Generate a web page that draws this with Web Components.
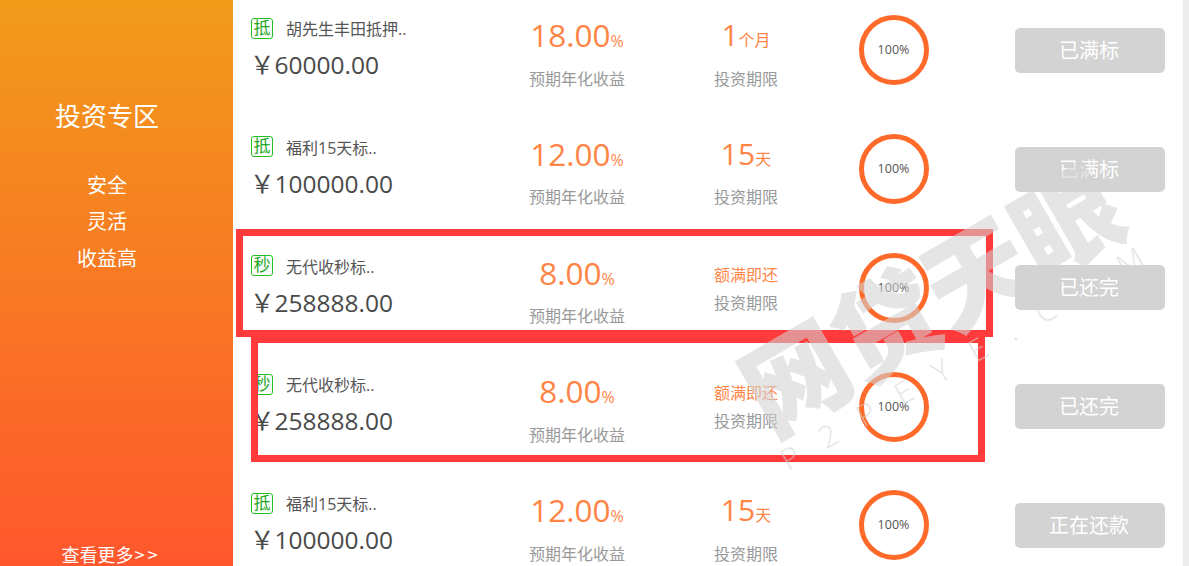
<!DOCTYPE html>
<html lang="zh">
<head>
<meta charset="utf-8">
<title>投资专区</title>
<style>
  html,body{margin:0;height:100%;overflow:hidden;background:#fff}
  body{font-family:"Open Sans","Noto Sans CJK SC",sans-serif}
</style>
</head>
<body>
<invest-page>
  <invest-side slot="side" heading="投资专区" more="查看更多" arrows=">>">
    <span>安全</span><span>灵活</span><span>收益高</span>
  </invest-side>
  <invest-row type="抵" name="胡先生丰田抵押.." amount="60000.00" rate="18.00" term="1" unit="个月" action="已满标"></invest-row>
  <invest-row type="抵" name="福利15天标.." amount="100000.00" rate="12.00" term="15" unit="天" action="已满标"></invest-row>
  <invest-row type="秒" name="无代收秒标.." amount="258888.00" rate="8.00" note="额满即还" action="已还完"></invest-row>
  <invest-row type="秒" name="无代收秒标.." amount="258888.00" rate="8.00" note="额满即还" action="已还完"></invest-row>
  <invest-row type="抵" name="福利15天标.." amount="100000.00" rate="12.00" term="15" unit="天" action="正在还款"></invest-row>
  <mark-box slot="over" style="left:236px;top:229px;width:743px;height:94px"></mark-box>
  <mark-box slot="over" style="left:251px;top:336px;width:720px;height:112px"></mark-box>
  <water-stamp slot="over"></water-stamp>
</invest-page>

<script>
// page shell: sidebar, list of rows, scrollbar strip, overlays on top
class InvestPage extends HTMLElement{
  constructor(){ super(); this.attachShadow({mode:'open'}); }
  connectedCallback(){
    this.shadowRoot.innerHTML = `
      <style>
        :host{display:flex;position:relative;width:1189px;height:566px;overflow:hidden}
        .list{width:950px;margin-top:-9px;flex:none}
        .bar{width:6px;flex:none;background:#ececec}
      </style>
      <slot name="side"></slot>
      <div class="list"><slot></slot></div>
      <div class="bar"></div>
      <slot name="over"></slot>
    `;
  }
}
customElements.define('invest-page', InvestPage);

class InvestSide extends HTMLElement{
  constructor(){ super(); this.attachShadow({mode:'open'}); }
  connectedCallback(){
    this.shadowRoot.innerHTML = `
      <style>
        :host{display:flex;flex:none;flex-direction:column;align-items:center;box-sizing:border-box;width:233px;height:566px;padding:96px 19px 0 0;color:#fff;background:linear-gradient(#f19b1a,#ff572d);font-family:"Noto Sans CJK SC",sans-serif}
        h2{margin:0;font-size:26px;font-weight:400;line-height:38px}
        .tags{display:grid;justify-items:center;grid-auto-rows:36.25px;margin-top:33px;font-size:20px;line-height:36px}
        ::slotted(span){display:block}
        .more{margin-top:auto;font-size:18px;line-height:24px;height:24px;margin-left:8px;white-space:nowrap}
        .more span{margin-left:1px;letter-spacing:3px}
      </style>
      <h2>${this.getAttribute('heading')}</h2>
      <div class="tags"><slot></slot></div>
      <div class="more">${this.getAttribute('more')}<span>&gt;&gt;</span></div>
    `;
  }
}
customElements.define('invest-side', InvestSide);

class InvestRow extends HTMLElement{
  constructor(){ super(); this.attachShadow({mode:'open'}); }
  connectedCallback(){
    const a = n=>this.getAttribute(n)||'';
    const period = a('note')
      ? `<div class="note">${a('note')}</div>`
      : `<div class="val term">${a('term')}<small>${a('unit')}</small></div>`;
    this.shadowRoot.innerHTML = `
      <style>
        :host{display:grid;grid-template-columns:226px 200px 138px 158px 1fr;box-sizing:border-box;height:118.75px;padding:0 18px;color:#4a4a4a}
        .name{display:flex;align-items:center;margin-top:26px;height:22px;font-size:16px;color:#555;white-space:nowrap}
        .badge{box-sizing:border-box;width:22px;height:21px;margin-right:13px;border:1px solid #22c022;border-radius:3px;color:#22a822;font-size:17px;line-height:18px;text-align:center}
        .amount{margin:9px 0 0 -1px;font-size:24.5px;line-height:34px;white-space:nowrap}
        .cell{padding-top:24px;text-align:center}
        .val{height:40px;font-size:31.5px;line-height:40px;color:#ff8547}
        small{font-size:16px}
        .term{font-size:30px}
        .note{height:28px;margin-top:8px;font-size:16px;line-height:28px;color:#ff8547}
        .lab{margin-top:11.5px;font-size:16px;line-height:24px;color:#999}
        .note + .lab{margin-top:2px}
        .ring{display:flex;justify-content:center;align-items:center}
        .ring div{box-sizing:border-box;width:70px;height:70px;margin-left:-1px;border:5px solid #ff6a2a;border-radius:50%;font-size:12.5px;line-height:60px;text-align:center;color:#555}
        .act{display:flex;align-items:center;justify-content:flex-end}
        .act div{box-sizing:border-box;width:150px;height:45px;padding-right:2px;border-radius:5px;background:#d3d3d3;color:#fff;font-size:20px;line-height:45px;text-align:center}
      </style>
      <div>
        <div class="name"><span class="badge">${a('type')}</span>${a('name')}</div>
        <div class="amount"><span>￥</span>${a('amount')}</div>
      </div>
      <div class="cell">
        <div class="val">${a('rate')}<small>%</small></div>
        <div class="lab">预期年化收益</div>
      </div>
      <div class="cell">
        ${period}
        <div class="lab">投资期限</div>
      </div>
      <div class="ring"><div>100%</div></div>
      <div class="act"><div>${a('action')}</div></div>
    `;
  }
}
customElements.define('invest-row', InvestRow);

// red rectangle drawn over the screenshot
class MarkBox extends HTMLElement{
  constructor(){ super(); this.attachShadow({mode:'open'}); }
  connectedCallback(){
    this.shadowRoot.innerHTML = `<style>:host{display:block;position:absolute;border:7px solid #ff3a3a;pointer-events:none}</style>`;
  }
}
customElements.define('mark-box', MarkBox);

class WaterStamp extends HTMLElement{
  constructor(){ super(); this.attachShadow({mode:'open'}); }
  connectedCallback(){
    this.shadowRoot.innerHTML = `
      <style>
        :host{display:block;position:absolute;left:732px;top:258px;width:420px;transform:rotate(-30deg);color:#d3d3d3;opacity:.57;pointer-events:none;font-family:"Noto Sans CJK SC",sans-serif}
        .big{height:90px;font-size:104px;font-weight:900;line-height:66px;text-align:center;white-space:nowrap;-webkit-text-stroke:1px #d3d3d3}
        .small{display:flex;justify-content:space-between;height:30px;padding-right:6px;font-family:"Open Sans",sans-serif;font-size:30px;font-weight:300;line-height:30px}
      </style>
      <div class="big">网贷天眼</div>
      <div class="small"><span>P</span><span>2</span><span>P</span><span>E</span><span>Y</span><span>E</span><span>.</span><span>C</span><span>O</span><span>M</span></div>
    `;
  }
}
customElements.define('water-stamp', WaterStamp);
</script>
</body>
</html>
